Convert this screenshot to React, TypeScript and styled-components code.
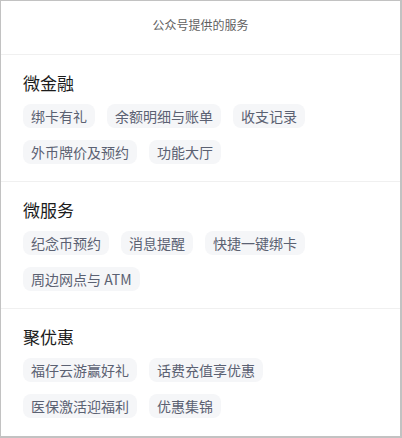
import styled, { createGlobalStyle } from 'styled-components'

const GlobalStyle = createGlobalStyle`
  html, body {
    margin: 0;
    padding: 0;
    background: #fff;
  }
  body {
    font-family: "Noto Sans CJK SC", "Noto Sans", sans-serif;
  }
`

const Panel = styled.div`
  box-sizing: border-box;
  width: 402px;
  height: 438px;
  border: 1px solid #c2c2c2;
  border-right-width: 2px;
  border-bottom-width: 2px;
  background: #fff;
  overflow: hidden;
`

const Header = styled.div`
  box-sizing: border-box;
  height: 54px;
  padding-top: 15px;
  font-size: 12px;
  line-height: 18px;
  color: #5f5f5f;
  text-align: center;
  border-bottom: 1px solid #f0f0f0;
`

const Section = styled.section<{ last?: boolean }>`
  padding: 18px 22px 17px;
  border-bottom: ${(p) => (p.last ? 'none' : '1px solid #f0f0f0')};
`

const Title = styled.h2`
  margin: 0 0 11px;
  font-size: 17px;
  line-height: 20px;
  font-weight: 400;
  color: #1c1c1c;
`

const Chips = styled.div`
  display: flex;
  flex-wrap: wrap;
  gap: 12px;
`

const Chip = styled.span`
  height: 24px;
  padding: 0 8px;
  font-size: 14px;
  line-height: 24px;
  color: #5b6172;
  background: #f5f6f8;
  border-radius: 8px;
  white-space: nowrap;
`

const groups = [
  { title: '微金融', items: ['绑卡有礼', '余额明细与账单', '收支记录', '外币牌价及预约', '功能大厅'] },
  { title: '微服务', items: ['纪念币预约', '消息提醒', '快捷一键绑卡', '周边网点与 ATM'] },
  { title: '聚优惠', items: ['福仔云游赢好礼', '话费充值享优惠', '医保激活迎福利', '优惠集锦'] },
]

const App = () => {
  return (
    <>
      <GlobalStyle />
      <Panel>
        <Header>公众号提供的服务</Header>
        {groups.map((g, i) => (
          <Section key={g.title} last={i === groups.length - 1}>
            <Title>{g.title}</Title>
            <Chips>
              {g.items.map((item) => (
                <Chip key={item}>{item}</Chip>
              ))}
            </Chips>
          </Section>
        ))}
      </Panel>
    </>
  )
}

export default App
